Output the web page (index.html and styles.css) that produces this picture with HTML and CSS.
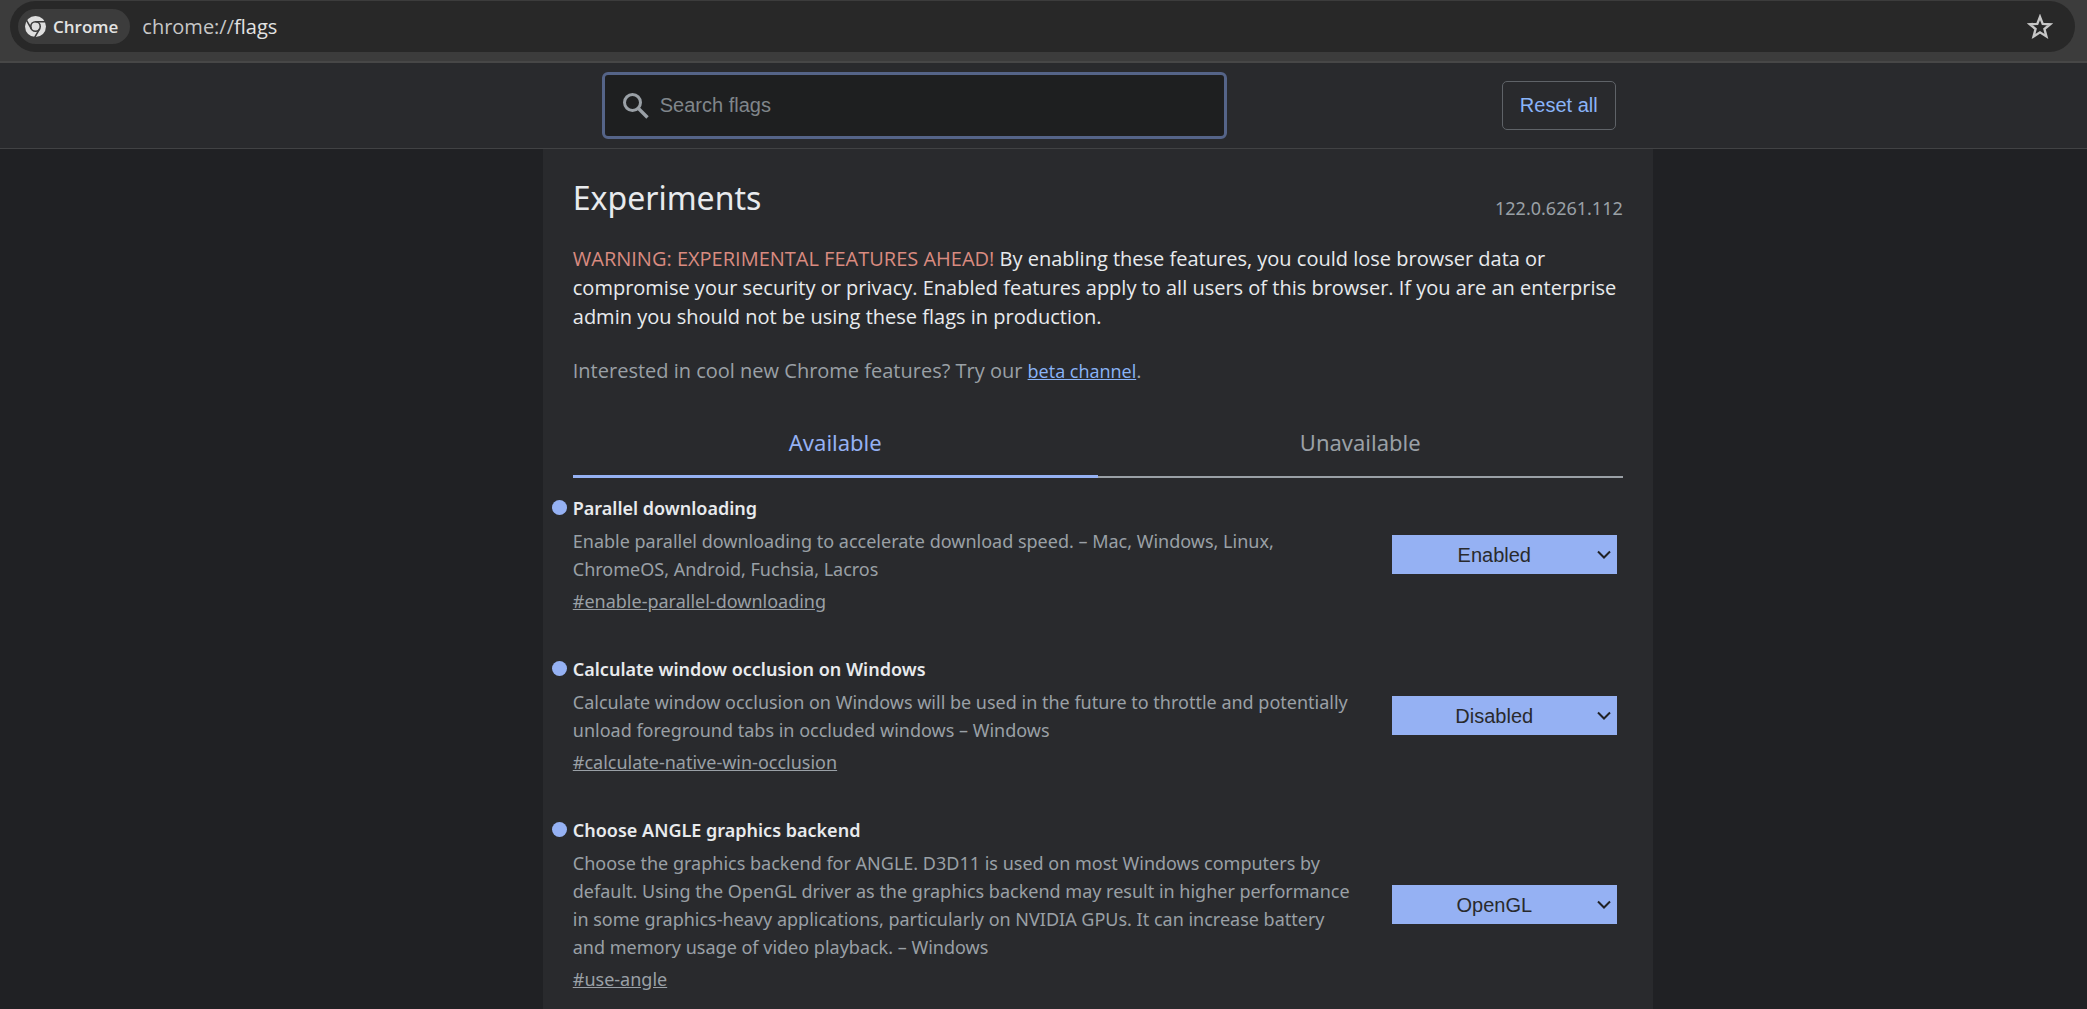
FILE: index.html
```html
<!DOCTYPE html>
<html lang="en">
<head>
<meta charset="utf-8">
<meta name="viewport" content="width=device-width, initial-scale=1">
<title>Experiments</title>
<link rel="stylesheet" href="styles.css">
</head>
<body>
<div class="toolbar">
  <div class="omnibox">
    <button class="chip" type="button">
      <svg class="chip-icon" viewBox="0 0 24 24" aria-hidden="true">
        <circle cx="12" cy="12" r="12" fill="#dfdfdf"/>
        <g fill="none" stroke="#3c3c3c" stroke-width="1.8">
          <circle cx="12" cy="12" r="5.4"/>
          <path d="M12 6.6H23.4M7.3 14.7L1.6 4.8M16.7 14.7L11 24.6"/>
        </g>
      </svg>
      <span>Chrome</span>
    </button>
    <div class="url"><span class="scheme">chrome://</span>flags</div>
    <button class="star" type="button" aria-label="Bookmark this tab">
      <svg viewBox="0 0 24 24" aria-hidden="true"><path d="M12 2.6l2.5 6.5 7 .4-5.4 4.4 1.8 6.8L12 16.9l-5.9 3.8 1.8-6.8L2.5 9.5l7-.4z" fill="none" stroke="#c7c7c7" stroke-width="2.2"/></svg>
    </button>
  </div>
</div>
<header class="header">
  <div class="header-inner">
    <label class="search">
      <svg class="search-icon" viewBox="0 0 26 26" aria-hidden="true"><circle cx="9.5" cy="9.5" r="8" fill="none" stroke="#9aa0a6" stroke-width="3"/><path d="M15.5 15.5L24.5 24.5" stroke="#9aa0a6" stroke-width="3.4"/></svg>
      <input type="text" placeholder="Search flags" aria-label="Search flags">
    </label>
    <button class="reset" type="button">Reset all</button>
  </div>
</header>
<div class="page">
  <main class="content">
    <div class="title-row">
      <h1>Experiments</h1>
      <span class="version">122.0.6261.112</span>
    </div>
    <p class="blurb"><span class="warning">WARNING: EXPERIMENTAL FEATURES AHEAD!</span> By enabling these features, you could lose browser data or compromise your security or privacy. Enabled features apply to all users of this browser. If you are an enterprise admin you should not be using these flags in production.</p>
    <p class="promo">Interested in cool new Chrome features? Try our <a href="#beta">beta channel</a>.</p>
    <div class="tabs" role="tablist">
      <button class="tab selected" type="button" role="tab" aria-selected="true">Available</button>
      <button class="tab" type="button" role="tab" aria-selected="false">Unavailable</button>
    </div>
    <section class="flag">
      <div class="flag-text">
        <h2 id="t1">Parallel downloading</h2>
        <p>Enable parallel downloading to accelerate download speed. – Mac, Windows, Linux, ChromeOS, Android, Fuchsia, Lacros</p>
        <a href="#enable-parallel-downloading">#enable-parallel-downloading</a>
      </div>
      <div class="picker">
        <select aria-labelledby="t1"><option>Default</option><option selected>Enabled</option><option>Disabled</option></select>
        <svg viewBox="0 0 14 9" aria-hidden="true"><path d="M1 1.5L7 7.5L13 1.5"/></svg>
      </div>
    </section>
    <section class="flag">
      <div class="flag-text">
        <h2 id="t2">Calculate window occlusion on Windows</h2>
        <p>Calculate window occlusion on Windows will be used in the future to throttle and potentially unload foreground tabs in occluded windows – Windows</p>
        <a href="#calculate-native-win-occlusion">#calculate-native-win-occlusion</a>
      </div>
      <div class="picker">
        <select aria-labelledby="t2"><option>Default</option><option>Enabled</option><option selected>Disabled</option></select>
        <svg viewBox="0 0 14 9" aria-hidden="true"><path d="M1 1.5L7 7.5L13 1.5"/></svg>
      </div>
    </section>
    <section class="flag">
      <div class="flag-text">
        <h2 id="t3">Choose ANGLE graphics backend</h2>
        <p>Choose the graphics backend for ANGLE. D3D11 is used on most Windows computers by default. Using the OpenGL driver as the graphics backend may result in higher performance in some graphics-heavy applications, particularly on NVIDIA GPUs. It can increase battery and memory usage of video playback. – Windows</p>
        <a href="#use-angle">#use-angle</a>
      </div>
      <div class="picker">
        <select aria-labelledby="t3"><option>Default</option><option selected>OpenGL</option><option>D3D11</option></select>
        <svg viewBox="0 0 14 9" aria-hidden="true"><path d="M1 1.5L7 7.5L13 1.5"/></svg>
      </div>
    </section>
  </main>
</div>
</body>
</html>
```

FILE: styles.css
```css
* { box-sizing: border-box; }
html { height: 100%; }
body {
  margin: 0;
  min-height: 100%;
  display: flex;
  flex-direction: column;
  background: #202124;
  color: #e8eaed;
  font: 18px/28px "Noto Sans", "Open Sans", sans-serif;
}
h1, h2, p { margin: 0; font-weight: 400; }
button, input, select { font: inherit; }

.toolbar {
  background: #3c3c3c;
  border-bottom: 2px solid #474747;
  padding: 1px 12px 9px 10px;
}
.omnibox {
  display: flex;
  align-items: center;
  height: 51px;
  padding: 0 22px 0 8px;
  border-radius: 26px;
  background: #282828;
}
.chip {
  display: flex;
  align-items: center;
  gap: 7px;
  height: 35px;
  padding: 0 12px 0 7px;
  border: 0;
  border-radius: 18px;
  background: #3c3c3c;
  color: #e3e3e3;
  font: 600 17px/28px "Open Sans", "Noto Sans", sans-serif;
}
.chip-icon { width: 21px; height: 21px; }
.url {
  flex: 1;
  margin-left: 12px;
  color: #e3e3e3;
  font: 20px/28px "Open Sans", "Noto Sans", sans-serif;
}
.scheme { color: #c7c7c7; }
.star { display: flex; padding: 0; border: 0; background: none; }
.star svg { width: 26px; height: 26px; }

/* The header and the page share one column grid */
.header, .page {
  display: grid;
  grid-template-columns: minmax(0, 5fr) minmax(0, 1110px) minmax(0, 4fr);
}
.header { background: #292a2d; border-bottom: 1px solid #414244; }
.header-inner, .content { grid-column: 2; }
.header-inner {
  display: flex;
  align-items: center;
  justify-content: space-between;
  padding: 9px 37px 9px 59px;
}
.search {
  display: flex;
  align-items: center;
  gap: 11px;
  width: 625px;
  height: 67px;
  padding: 0 17px 0 18px;
  border: 3px solid #556488;
  border-radius: 6px;
  background: #1e1f20;
}
.search-icon { width: 26px; height: 26px; flex: none; }
.search input {
  flex: 1;
  min-width: 0;
  padding: 0 0 2px;
  border: 0;
  outline: 0;
  background: none;
  color: #e8eaed;
}
.search input, .reset, .picker select { font: 20px/28px "Liberation Sans", Arial, sans-serif; }
.search input::placeholder { color: #80868b; }
.reset {
  width: 114px;
  height: 49px;
  padding: 0 0 2px;
  border: 1px solid #5f6368;
  border-radius: 5px;
  background: none;
  color: #8ab4f8;
}

.page { flex: 1; }
.content { background: #292a2d; padding: 21px 30px 0; }
.title-row { display: flex; justify-content: space-between; align-items: flex-end; height: 52px; }
h1 { font-size: 32px; line-height: 48px; }
.version { color: #9aa0a6; }
.blurb, .promo { font-family: "Open Sans", "Noto Sans", sans-serif; font-size: 20px; }
.blurb { margin-top: 22px; line-height: 29px; font-weight: 500; }
.warning { color: #d98b80; font-weight: 400; }
.promo { margin-top: 26px; color: #9aa0a6; }
.promo a { color: #8ab4f8; font-size: 18px; }
.tabs { display: flex; margin-top: 26px; }
.tab {
  flex: 1;
  height: 67px;
  padding: 0 0 3px;
  border: 0;
  border-bottom: 2px solid #9aa0a6;
  background: none;
  color: #9aa0a6;
  font-size: 22px;
}
.tab.selected { padding-bottom: 2px; border-bottom: 3px solid #95b1f3; color: #95b1f3; }

.flag {
  display: flex;
  align-items: center;
  gap: 36px;
  padding: 16px 6px 24px 0;
}
.flag-text { flex: 1; min-width: 0; color: #9aa0a6; }
.flag-text a { color: inherit; }
h2 {
  position: relative;
  margin-bottom: 5px;
  color: #e8eaed;
  font-size: 18px;
  line-height: 28px;
  font-weight: 600;
}
h2::before {
  content: "";
  position: absolute;
  left: -21px;
  top: 6px;
  width: 15px;
  height: 15px;
  border-radius: 50%;
  background: #95b1f3;
}
.flag-text p { margin-bottom: 4px; }
.picker { position: relative; width: 225px; flex: none; }
.picker select {
  appearance: none;
  display: block;
  width: 100%;
  height: 39px;
  padding: 0 20px 0 0;
  border: 0;
  border-radius: 0;
  background: #95b1f3;
  color: #292a2d;
  text-align: center;
}
.picker svg {
  position: absolute;
  right: 6px;
  top: 15px;
  width: 14px;
  height: 9px;
  fill: none;
  stroke: #202124;
  stroke-width: 2;
  pointer-events: none;
}
```
